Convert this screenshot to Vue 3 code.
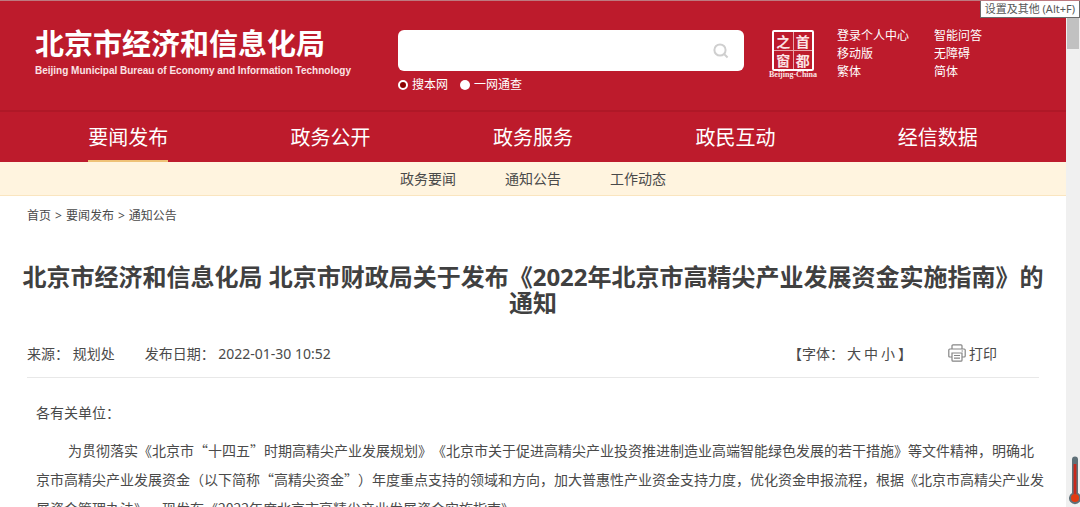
<script setup>
  import { ref } from 'vue'

  const keyword = ref('')
  const scope = ref('site')

  const scopes = [
    { value: 'site', label: '搜本网' },
    { value: 'all', label: '一网通查' }
  ]

  const quickLinks = ['登录个人中心', '智能问答', '移动版', '无障碍', '繁体', '简体']

  const nav = ['要闻发布', '政务公开', '政务服务', '政民互动', '经信数据']
  const activeNav = ref('要闻发布')

  const subnav = ['政务要闻', '通知公告', '工作动态']

  const sizes = ['大', '中', '小']
</script>

<template>
  <div class="window">
    <div class="page">
      <header class="header">
        <a class="brand" href="#">
          <span class="brand__name">北京市经济和信息化局</span>
          <span class="brand__en">Beijing Municipal Bureau of Economy and Information Technology</span>
        </a>

        <form class="search" @submit.prevent>
          <div class="search__box">
            <input v-model="keyword" class="search__input" type="text" aria-label="搜索">
            <button class="search__btn" type="submit" aria-label="搜索">
              <svg width="16" height="16" viewBox="0 0 16 16" fill="none" stroke="#cfcfcf" stroke-width="2">
                <circle cx="7" cy="7" r="5.6" />
                <path d="M11 11l3.6 3.4" />
              </svg>
            </button>
          </div>
          <div class="search__scopes">
            <label v-for="s in scopes" :key="s.value" class="scope">
              <input v-model="scope" class="scope__radio" type="radio" name="scope" :value="s.value">
              {{ s.label }}
            </label>
          </div>
        </form>

        <a class="seal" href="#">
          <span class="seal__grid">
            <span>之</span><span>首</span><span>窗</span><span>都</span>
          </span>
          <span class="seal__en">Beijing-China</span>
        </a>

        <div class="quick">
          <a v-for="link in quickLinks" :key="link" href="#">{{ link }}</a>
        </div>
      </header>

      <nav class="nav">
        <div v-for="item in nav" :key="item" class="nav__cell">
          <a
            href="#"
            class="nav__link"
            :class="{ 'nav__link--active': item === activeNav }"
            @click.prevent="activeNav = item"
            >{{ item }}</a>
        </div>
      </nav>

      <nav class="subnav">
        <a v-for="item in subnav" :key="item" href="#">{{ item }}</a>
      </nav>

      <main class="article">
        <div class="crumbs">
          <a href="#">首页</a><span>&gt;</span><a href="#">要闻发布</a><span>&gt;</span><a href="#">通知公告</a>
        </div>

        <h1 class="title">北京市经济和信息化局 北京市财政局关于发布《2022年北京市高精尖产业发展资金实施指南》的通知</h1>

        <div class="meta">
          <span class="meta__source">来源： 规划处</span>
          <span class="meta__date">发布日期： 2022-01-30 10:52</span>
          <span class="meta__size">
            <span>【字体：</span>
            <button v-for="s in sizes" :key="s" type="button">{{ s }}</button>
            <span>】</span>
          </span>
          <button class="meta__print" type="button">
            <svg width="18" height="18" viewBox="0 0 18 18" fill="none" stroke="#858585" stroke-width="1.2">
              <path d="M4 5V1.8Q4 .8 5 .8h8q1 0 1 1V5" />
              <path d="M4 13H1.8q-1 0-1-1V6q0-1 1-1h14.4q1 0 1 1v6q0 1-1 1H14" />
              <path d="M4 9h10v7.2q0 1-1 1H5q-1 0-1-1z" />
              <path d="M6 11.5h6M6 14.2h6M13.5 7h1.5" />
            </svg>
            打印
          </button>
        </div>

        <div class="content">
          <p>各有关单位：</p>
          <p class="content__para">为贯彻落实《北京市“十四五”时期高精尖产业发展规划》《北京市关于促进高精尖产业投资推进制造业高端智能绿色发展的若干措施》等文件精神，明确北京市高精尖产业发展资金（以下简称“高精尖资金”）年度重点支持的领域和方向，加大普惠性产业资金支持力度，优化资金申报流程，根据《北京市高精尖产业发展资金管理办法》，现发布《2022年度北京市高精尖产业发展资金实施指南》</p>
        </div>
      </main>
    </div>

    <div class="scrollbar">
      <div class="scrollbar__thumb"></div>
    </div>

    <div class="tooltip">设置及其他 (Alt+F)</div>

    <svg class="thermo" width="12" height="50" viewBox="0 0 12 50">
      <path d="M3 3.5a3 3 0 0 1 6 0V37a6 6 0 1 1-6 0z" fill="#5f7078" />
      <path d="M4.6 8h2.8v30H4.6z" fill="#c9281c" />
      <circle cx="6" cy="42" r="4" fill="#e23a10" />
    </svg>
  </div>
</template>

<style>
  body {
    overflow: hidden;
  }
</style>

<style scoped>
  .window {
    position: relative;
    display: flex;
    height: 100vh;
    overflow: hidden;
    box-sizing: border-box;
    border-top: 1px solid #bd7a80;
    font-family: "Noto Sans", "Noto Sans CJK SC", sans-serif;
    font-size: 14px;
    color: #4a4a4a;
    background-color: #ffffff;
    text-spacing-trim: space-all;
  }

  a {
    color: inherit;
    text-decoration: none;
  }

  button {
    padding: 0;
    border: 0;
    background: none;
    color: inherit;
    font: inherit;
    cursor: pointer;
  }

  .page {
    flex: 1;
    min-width: 0;
  }

  .header {
    display: flex;
    align-items: flex-start;
    height: 109px;
    box-sizing: border-box;
    padding: 26px 28px 0 35px;
    background-color: #bd1b2c;
    color: #ffffff;
  }

  .brand {
    flex: none;
    display: flex;
    flex-direction: column;
    width: 363px;
  }

  .brand__name {
    font-size: 29px;
    line-height: 34px;
    font-weight: bold;
    white-space: nowrap;
  }

  .brand__en {
    font-family: "Liberation Sans", sans-serif;
    font-size: 10px;
    line-height: 20px;
    font-weight: bold;
    white-space: nowrap;
    color: #fbe3e5;
  }

  .search {
    flex: 1;
    max-width: 346px;
    padding-top: 3px;
  }

  .search__box {
    display: flex;
    align-items: center;
    height: 41px;
    padding-right: 14px;
    border-radius: 6px;
    background-color: #ffffff;
  }

  .search__input {
    flex: 1;
    min-width: 0;
    height: 36px;
    padding: 0 12px;
    border: 0;
    outline: none;
    background: none;
    font: inherit;
  }

  .search__btn {
    display: flex;
    padding: 1px;
  }

  .search__scopes {
    display: flex;
    gap: 12px;
    margin-top: 4px;
    font-size: 12px;
    line-height: 20px;
  }

  .scope {
    display: flex;
    align-items: center;
    gap: 4px;
  }

  .scope__radio {
    appearance: none;
    width: 10px;
    height: 10px;
    margin: 0;
    border-radius: 50%;
    background-color: #ffffff;
  }

  .scope__radio:checked {
    border: 2px solid #ffffff;
    background-color: #8b0000;
  }

  .seal {
    flex: none;
    display: flex;
    flex-direction: column;
    align-items: center;
    margin-left: 25px;
    padding-top: 3px;
    width: 48px;
  }

  .seal__grid {
    display: grid;
    grid-template-columns: 1fr 1fr;
    grid-template-rows: 1fr 1fr;
    gap: 1px;
    width: 42px;
    height: 41px;
    box-sizing: border-box;
    border: 2px solid #ffffff;
    border-radius: 2px;
    background-color: #e8a5ac;
    font-family: "Noto Sans CJK SC", sans-serif;
    font-size: 14px;
    line-height: 18px;
    font-weight: bold;
    text-align: center;
    color: #fbe3e5;
  }

  .seal__grid span {
    background-color: #bd1b2c;
  }

  .seal__en {
    font-family: "Liberation Serif", serif;
    font-size: 8px;
    line-height: 8px;
    font-weight: bold;
    white-space: nowrap;
    color: #fbe3e5;
  }

  .quick {
    flex: none;
    display: grid;
    grid-template-columns: auto auto;
    column-gap: 25px;
    margin-left: 20px;
    font-size: 12px;
    line-height: 18px;
  }

  .nav {
    display: flex;
    height: 52px;
    box-sizing: border-box;
    padding: 0 27px;
    border-top: 2px solid #af1827;
    background-color: #bd1b2c;
    color: #ffffff;
  }

  .nav__cell {
    flex: 1;
    display: flex;
    justify-content: center;
  }

  .nav__link {
    padding-top: 4px;
    font-size: 20px;
    line-height: 44px;
    border-bottom: 2px solid transparent;
  }

  .nav__link--active {
    border-bottom-color: #efc277;
  }

  .subnav {
    display: flex;
    justify-content: center;
    gap: 49px;
    border-bottom: 1px solid #fae5bf;
    background-color: #fff4df;
    line-height: 33px;
  }

  .article {
    padding: 10px 20px 0;
  }

  .crumbs {
    display: flex;
    gap: 4px;
    padding: 0 7px;
    font-size: 12px;
    line-height: 20px;
  }

  .title {
    margin: 38px 0 0;
    font-size: 24px;
    line-height: 26px;
    text-align: center;
    color: #404040;
  }

  .meta {
    display: flex;
    align-items: center;
    height: 49px;
    margin: 12px 7px 0;
    padding-right: 42px;
    border-bottom: 1px solid #e8e8e8;
  }

  .meta__date {
    margin-left: 30px;
  }

  .meta__size {
    display: flex;
    gap: 3px;
    margin-left: auto;
  }

  .meta__print {
    display: flex;
    align-items: center;
    gap: 3px;
    margin-left: 36px;
  }

  .content {
    padding: 20px 0 0 16px;
    font-family: "Noto Sans CJK SC", sans-serif;
    line-height: 29px;
  }

  .content p {
    margin: 0 0 9px;
  }

  .content .content__para {
    text-indent: 32px;
  }

  .scrollbar {
    flex: none;
    width: 14px;
    box-sizing: border-box;
    padding: 16px 1px 0;
    background-color: #f0f0f0;
  }

  .scrollbar__thumb {
    height: 32px;
    background-color: #c1c1c1;
  }

  .tooltip {
    position: absolute;
    top: -2px;
    right: 0;
    padding: 0 4px;
    border: 1px solid #6b6b6b;
    background-color: #ffffff;
    font-size: 11px;
    line-height: 17px;
    color: #575757;
    white-space: nowrap;
  }

  .thermo {
    position: absolute;
    right: -1px;
    bottom: 1px;
  }
</style>
